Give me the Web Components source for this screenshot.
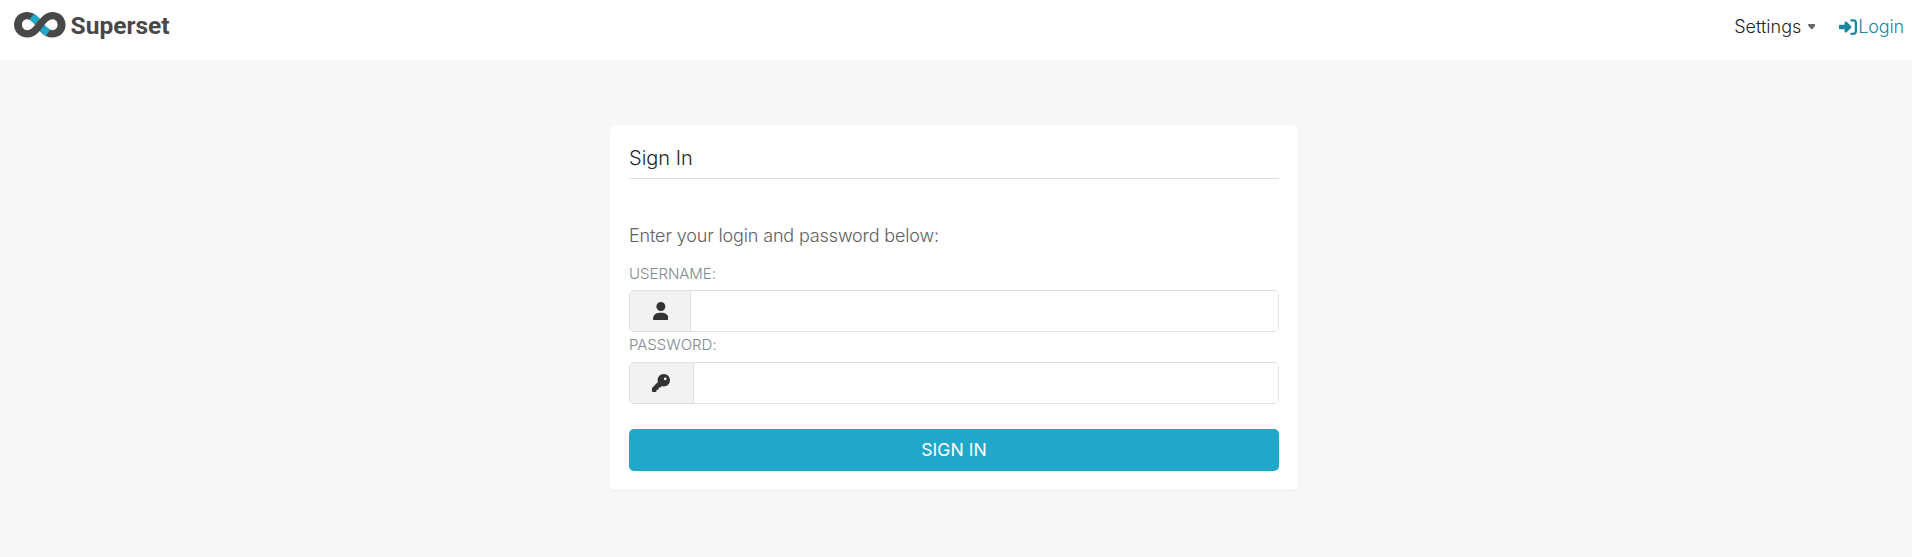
<!DOCTYPE html>
<html lang="en">
<head>
<meta charset="utf-8">
<title>Superset</title>
<style>
body{margin:0;background:#f7f7f7;font-family:Inter,"Liberation Sans",sans-serif;font-weight:350;font-size:18px;color:#262626;min-height:557px}
</style>
</head>
<body>
<superset-navbar>
  <superset-logo slot="brand">Superset</superset-logo>
  <nav-link caret>Settings</nav-link>
  <nav-link class="login" accent icon="login">Login</nav-link>
</superset-navbar>
<sign-in-panel heading="Sign In">
  <credential-field label="Username:" icon="user" type="text"></credential-field>
  <credential-field label="Password:" icon="key" type="password"></credential-field>
  <submit-button slot="action">SIGN IN</submit-button>
</sign-in-panel>
<script>
const ICONS = {
  login: ['0 0 512 512', 'M217.9 105.9L340.7 228.7c7.2 7.2 11.3 17.1 11.3 27.3s-4.1 20.1-11.3 27.3L217.9 406.1c-6.4 6.4-15 9.9-24 9.9c-18.7 0-33.9-15.2-33.9-33.9l0-62.1L32 320c-17.7 0-32-14.3-32-32l0-64c0-17.7 14.3-32 32-32l128 0 0-62.1c0-18.7 15.2-33.9 33.9-33.9c9 0 17.6 3.6 24 9.9zM352 416l64 0c17.7 0 32-14.3 32-32l0-256c0-17.7-14.3-32-32-32l-64 0c-17.7 0-32-14.3-32-32s14.3-32 32-32l64 0c53 0 96 43 96 96l0 256c0 53-43 96-96 96l-64 0c-17.7 0-32-14.3-32-32s14.3-32 32-32z'],
  user: ['0 0 448 512', 'M224 256A128 128 0 1 0 224 0a128 128 0 1 0 0 256zm-45.7 48C79.8 304 0 383.8 0 482.3C0 498.7 13.3 512 29.7 512H418.3c16.4 0 29.7-13.3 29.7-29.7C448 383.8 368.2 304 269.7 304H178.3z'],
  key: ['0 0 512 512', 'M336 352c97.2 0 176-78.8 176-176S433.2 0 336 0S160 78.8 160 176c0 18.7 2.9 36.8 8.3 53.7L7 391c-4.5 4.5-7 10.6-7 17v80c0 13.3 10.7 24 24 24h80c13.3 0 24-10.7 24-24V448h40c13.3 0 24-10.7 24-24V384h40c6.4 0 12.5-2.5 17-7l33.3-33.3c16.9 5.4 35 8.3 53.7 8.3zM376 96a40 40 0 1 1 0 80 40 40 0 1 1 0-80z']
};
const icon = n => `<svg viewBox="${ICONS[n][0]}" aria-hidden="true"><path fill="currentColor" d="${ICONS[n][1]}"/></svg>`;

class Base extends HTMLElement {
  connectedCallback() {
    if (!this.shadowRoot) this.attachShadow({mode: 'open'}).innerHTML = this.render();
  }
}
customElements.define('superset-navbar', class extends Base {
  render() { return `<style>
    :host{display:flex;justify-content:space-between;height:60px;box-sizing:border-box;background:#fff;padding:0 8px 0 14px}
    nav{display:flex;height:53px;align-items:center}
  </style><slot name="brand"></slot><nav><slot></slot></nav>`; }
});
customElements.define('superset-logo', class extends Base {
  render() { return `<style>
    :host{display:flex;align-items:center;height:50px;font:700 24.5px/28px Roboto,sans-serif;color:#484848}
    svg{width:51.6px;height:25.6px;margin-right:5px}
    span{padding-top:1px}
  </style><svg viewBox="17.8 15.2 75.3 37.3" aria-hidden="true">
    <path fill="#484848" d="M73.79,15.23C67.32,15.23,61.36,18.8,55.6,25.23,50,18.8,43.94,15.23,37.11,15.23c-11,0-19.27,7.86-19.27,18.71s8.28,18.49,19.28,18.49c6.89,0,12.15-3.18,18.2-9.6,5.9,6.5,11.66,9.6,18.46,9.6,11,0,19.28-7.57,19.28-18.49S84.79,15.23,73.79,15.23ZM37.24,41.66c-4.92,0-7.74-3.19-7.74-7.79s2.82-8,7.74-8c4.13,0,7.54,3.25,11.42,8C45,38.6,41.31,41.66,37.24,41.66Zm36.44,0c-4.06,0-7.54-3.19-11.35-7.79,4-4.93,7.22-8,11.35-8,4.92,0,7.67,3.38,7.67,8S78.6,41.66,73.68,41.66Z"/>
    <path fill="#20a7c9" d="M55.6 25.23Q51.5 20.5 47.3 17.6L40 26.4Q44 28.3 48.66 33.9ZM62.33 33.9Q66.5 38.9 71 41L64 49.8Q59.5 47.3 55.32 42.8Z"/>
  </svg><span><slot></slot></span>`; }
});
customElements.define('nav-link', class extends Base {
  render() { return `<style>
    :host{display:flex;align-items:center;line-height:26px}
    :host([accent]){color:#1985a0;margin-left:24px;letter-spacing:-.15px}
    svg{width:18px;height:18px;margin-right:1px}
    i{width:7px;height:5px;margin-left:7px;background:#666;clip-path:polygon(0 0,100% 0,100% 35%,60% 100%,40% 100%,0 35%)}
  </style>${this.hasAttribute('icon') ? icon(this.getAttribute('icon')) : ''}<slot></slot>${this.hasAttribute('caret') ? '<i></i>' : ''}`; }
});
customElements.define('sign-in-panel', class extends Base {
  render() { return `<style>
    :host{display:block;box-sizing:border-box;width:688px;height:365px;margin:65px 0 0 610px;padding:18px 19px;background:#fff;border-radius:5px;box-shadow:0 1px 1px rgba(0,0,0,.05)}
    h1{margin:0;font-size:20px;line-height:30px;font-weight:350;height:36px;box-sizing:border-box;border-bottom:1px solid #e0e0e0}
    p{margin:44px 0 11px;line-height:26px;color:#606060;letter-spacing:-.14px}
  </style><h1>${this.getAttribute('heading')}</h1>
  <p>Enter your login and password below:</p>
  <slot></slot><slot name="action"></slot>`; }
});
customElements.define('credential-field', class extends Base {
  render() { return `<style>
    :host{display:block}
    label{display:block;height:30px;line-height:27px;font-size:15px;color:#7c8a91;text-transform:uppercase;letter-spacing:-.02px}
    :host([icon=key]) label{line-height:25px}
    .group{display:flex;height:42px;box-sizing:border-box;border:1px solid #e0e0e0;border-radius:5px;overflow:hidden}
    .addon{display:flex;align-items:center;box-sizing:border-box;width:61px;padding-left:22.5px;background:#f2f2f2;border-right:1px solid #e0e0e0;color:#333}
    :host([icon=key]) .addon{width:64px;padding-left:22px}
    svg{height:18px;display:block}
    input{flex:1;min-width:0;border:0;padding:0 18px;outline:0;background:#fff;font:inherit}
  </style><label for="f">${this.getAttribute('label')}</label>
  <div class="group"><span class="addon">${icon(this.getAttribute('icon'))}</span><input id="f" type="${this.getAttribute('type')}"></div>`; }
});
customElements.define('submit-button', class extends Base {
  render() { return `<style>
    :host{display:block;margin-top:25px}
    button{display:block;width:100%;height:42px;border:0;border-radius:5px;background:#20a7c9;color:#fff;font:400 17.6px/26px Inter,sans-serif;padding:0}
  </style><button><slot></slot></button>`; }
});
</script>
</body>
</html>
